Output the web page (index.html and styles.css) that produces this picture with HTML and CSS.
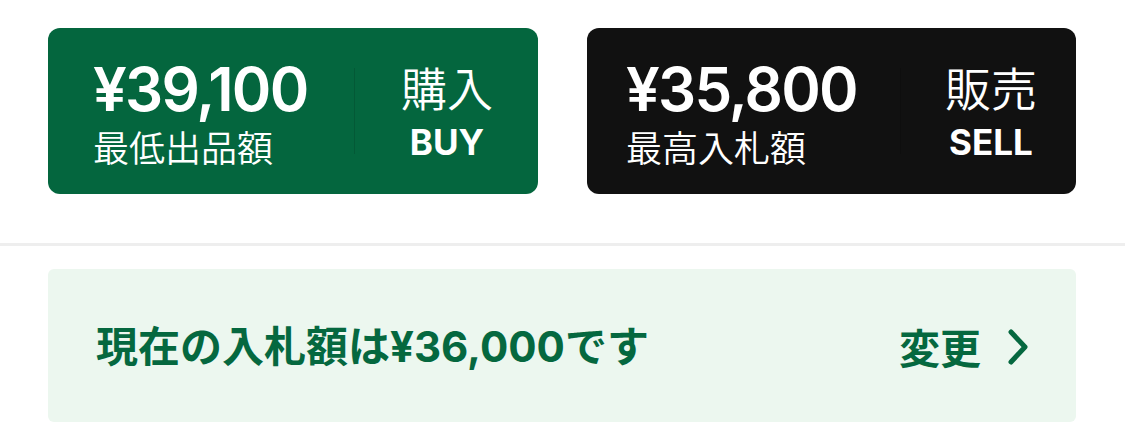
FILE: index.html
```html
<!DOCTYPE html>
<html lang="ja">
<head>
<meta charset="utf-8">
<link rel="stylesheet" href="styles.css">
</head>
<body>
<div class="page">
  <div class="cards">
    <div class="card card-buy">
      <div class="price-col">
        <div class="price">¥39,100</div>
        <div class="price-label">最低出品額</div>
      </div>
      <div class="vdiv"></div>
      <div class="action-col">
        <div class="action-ja">購入</div>
        <div class="action-en">BUY</div>
      </div>
    </div>
    <div class="card card-sell">
      <div class="price-col">
        <div class="price">¥35,800</div>
        <div class="price-label">最高入札額</div>
      </div>
      <div class="vdiv"></div>
      <div class="action-col">
        <div class="action-ja">販売</div>
        <div class="action-en">SELL</div>
      </div>
    </div>
  </div>
  <div class="rule"></div>
  <div class="bid-wrap">
    <div class="bid">
      <div class="bid-text">現在の入札額は<span class="num">¥36,000</span>です</div>
      <div class="bid-change">
        <span>変更</span>
        <svg class="chev" width="20" height="36" viewBox="0 0 20 36"><path d="M3 3 L17 18 L3 33" fill="none" stroke="#05683f" stroke-width="5" stroke-linecap="round" stroke-linejoin="round"/></svg>
      </div>
    </div>
  </div>
</div>
</body>
</html>
```

FILE: styles.css
```css
* { box-sizing: border-box; margin: 0; padding: 0; }
html, body { background: #ffffff; }
body {
  width: 1125px;
  height: 429px;
  overflow: hidden;
  font-family: Inter, "Noto Sans CJK JP", sans-serif;
  color: #ffffff;
}
.cards {
  display: grid;
  grid-template-columns: 490px 489px;
  column-gap: 49px;
  padding: 28px 0 0 48px;
}
.card {
  height: 166px;
  border-radius: 12px;
  display: flex;
  align-items: center;
  justify-content: space-between;
}
.card-buy { background: #04663e; padding: 0 45px 0 45px; }
.card-sell { background: #111111; padding: 0 39px 0 39px; }
.price-col { display: flex; flex-direction: column; }
.price {
  font-family: Inter, sans-serif;
  font-weight: 600;
  font-size: 60px;
  line-height: 60px;
  letter-spacing: -1.8px;
}
.price-label {
  margin-top: 9px;
  font-family: "Noto Sans CJK JP", sans-serif;
  font-weight: 350;
  font-size: 36px;
  line-height: 36px;
}
.vdiv {
  width: 1px;
  height: 86px;
  background: rgba(0, 0, 0, 0.12);
}
.action-col {
  display: flex;
  flex-direction: column;
  align-items: center;
}
.action-ja {
  font-family: "Noto Sans CJK JP", sans-serif;
  font-weight: 350;
  font-size: 46px;
  line-height: 46px;
}
.action-en {
  margin-top: 15px;
  font-family: Inter, sans-serif;
  font-weight: 700;
  font-size: 35px;
  line-height: 36px;
}
.rule {
  margin-top: 49px;
  height: 3px;
  background: #eeeeee;
}
.bid-wrap { padding: 23px 49px 0 48px; }
.bid {
  height: 153px;
  background: #ecf7ef;
  border-radius: 6px;
  display: flex;
  align-items: center;
  justify-content: space-between;
  padding: 0 48px 0 48px;
  color: #05683f;
  font-weight: 700;
}
.bid-text {
  font-family: "Noto Sans CJK JP", sans-serif;
  font-size: 42px;
  line-height: 48px;
}
.num { font-family: Inter, sans-serif; }
.bid-change {
  display: flex;
  align-items: center;
  gap: 27px;
  font-family: "Noto Sans CJK JP", sans-serif;
  font-size: 41px;
  line-height: 48px;
}
.chev { display: block; margin-top: 2px; }
```
